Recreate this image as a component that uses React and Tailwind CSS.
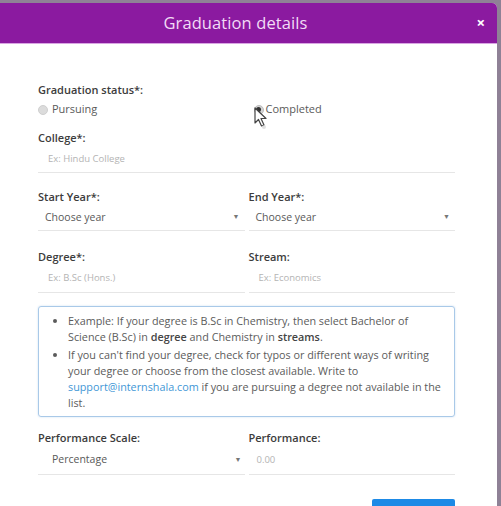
const font = { fontFamily: '"Open Sans", "Noto Sans", sans-serif' }

function Label({ children, className = '' }) {
  return <div className={`h-[17px] leading-[17px] text-[11px] font-semibold text-[#3c3c3c] ${className}`}>{children}</div>
}

function TextInput({ placeholder, className = 'h-[27px] pl-[10px]' }) {
  return (
    <div className={`flex items-center border-b border-[#e6e6e6] text-[9.5px] text-[#b4b4b4] ${className}`}>
      {placeholder}
    </div>
  )
}

function Select({ value, className = 'h-[26px] pl-[7px] pr-[5px]' }) {
  return (
    <div className={`flex items-center justify-between border-b border-[#e6e6e6] text-[10.5px] text-[#595959] ${className}`}>
      <span>{value}</span>
      <span className="text-[7px] text-[#777]">▼</span>
    </div>
  )
}

export default function App() {
  return (
    <div style={font} className="w-[501px] h-[506px] overflow-hidden bg-[#8f8196]">
      <div className="mt-[3px] w-[497px] h-[503px] bg-white rounded-tr-[5px] overflow-hidden">
        {/* Header */}
        <div className="relative h-[41px] bg-[#8b1aa0] border-b border-[#d9a5e3] flex items-center justify-center pr-[26px]">
          <span className="text-[16.5px] text-[#f2dcf6] tracking-[0.1px]">Graduation details</span>
          <span className="absolute right-[12px] top-[12px] text-[15px] font-bold text-white leading-none">×</span>
        </div>

        <div className="pl-[38px] w-[455px] pt-[37px]">
          <Label>Graduation status*:</Label>
          <div className="relative grid grid-cols-2 gap-x-[4px] mt-[3px] h-[17px] items-center text-[11px] text-[#5a5a5a]">
            <label className="flex items-center gap-[4px]">
              <span className="w-[10px] h-[10px] rounded-full bg-[#dcdcdc] border border-[#cfcfcf]" />
              <span>Pursuing</span>
            </label>
            <label className="flex items-center gap-[2px] pl-[5px]">
              <span className="w-[10px] h-[10px] rounded-full bg-[#d4d4d4] border border-[#bdbdbd] flex items-center justify-center">
                <span className="w-[5px] h-[5px] rounded-full bg-[#333]" />
              </span>
              <span>Completed</span>
            </label>
            <svg className="absolute left-[216px] top-[6px]" width="14" height="22" viewBox="0 0 14 22">
              <path d="M1 1 L1 16 L4.5 12.5 L7.5 19 L10 18 L7 11.5 L12 11.5 Z" fill="#fff" stroke="#444" strokeWidth="1.2" strokeLinejoin="round" />
              <circle cx="10" cy="20" r="2" fill="#ccc" opacity="0.6" />
            </svg>
          </div>

          <Label className="mt-[11px]">College*:</Label>
          <TextInput placeholder="Ex: Hindu College" />

          <div className="grid grid-cols-2 gap-x-[4px] mt-[15px]">
            <div>
              <Label>Start Year*:</Label>
              <Select value="Choose year" />
            </div>
            <div>
              <Label>End Year*:</Label>
              <Select value="Choose year" />
            </div>
          </div>

          <div className="grid grid-cols-2 gap-x-[4px] mt-[17px]">
            <div>
              <Label>Degree*:</Label>
              <TextInput placeholder="Ex: B.Sc (Hons.)" className="h-[28px] pl-[10px]" />
            </div>
            <div>
              <Label>Stream:</Label>
              <TextInput placeholder="Ex: Economics" className="h-[28px] pl-[10px]" />
            </div>
          </div>

          <div className="mt-[13px] border border-[#a9c9e8] rounded-[3px] pl-[16px] pr-[12px] pt-[6px] pb-[5px] text-[10.8px] leading-[16px] text-[#5b5b5b] shadow-[0_0_2px_rgba(120,170,220,0.4)]">
            <ul className="list-disc pl-[13px] space-y-[2px]">
              <li>
                Example: If your degree is B.Sc in Chemistry, then select Bachelor of Science (B.Sc) in{' '}
                <b className="font-semibold text-[#444]">degree</b> and Chemistry in{' '}
                <b className="font-semibold text-[#444]">streams</b>.
              </li>
              <li>
                If you can't find your degree, check for typos or different ways of writing your degree or choose from the closest available. Write to{' '}
                <a className="text-[#3f97d6]">support@internshala.com</a> if you are pursuing a degree not available in the list.
              </li>
            </ul>
          </div>

          <div className="grid grid-cols-2 gap-x-[4px] mt-[12px]">
            <div>
              <Label>Performance Scale:</Label>
              <Select value="Percentage" className="h-[29px] pl-[14px] pr-[3px]" />
            </div>
            <div>
              <Label>Performance:</Label>
              <TextInput placeholder="0.00" className="h-[29px] pl-[8px]" />
            </div>
          </div>

          <div className="flex justify-end mt-[24px]">
            <button className="w-[83px] h-[30px] bg-[#1d8ae6] rounded-t-[2px]" />
          </div>
        </div>
      </div>
    </div>
  )
}
